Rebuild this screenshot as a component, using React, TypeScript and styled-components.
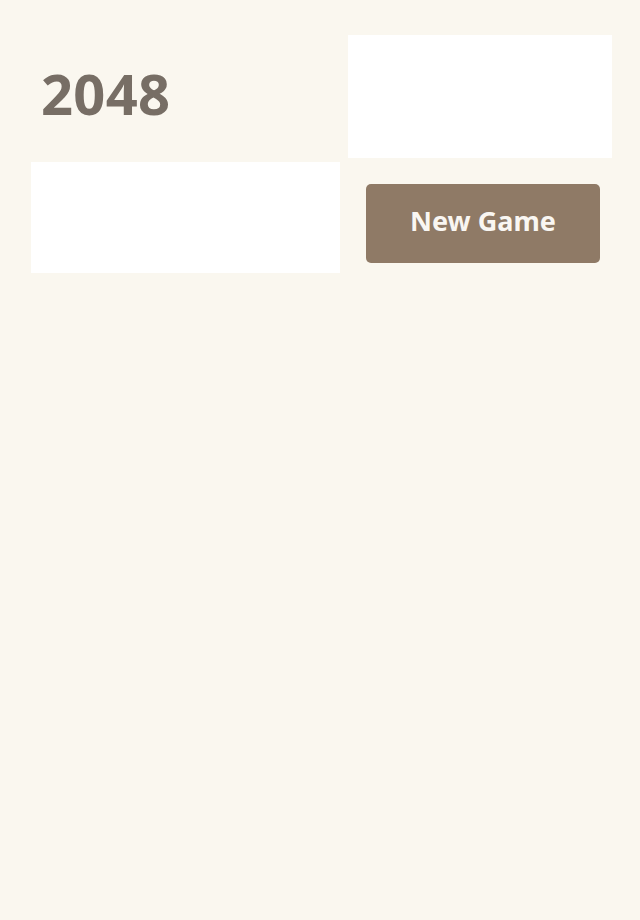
import React from "react";
import styled, { createGlobalStyle } from "styled-components";

const Global = createGlobalStyle`
  html, body { margin: 0; padding: 0; background: #faf7ef; }
  body { font-family: "Noto Sans", "Open Sans", sans-serif; }
`;

const Page = styled.div`
  min-height: 920px;
  background: #faf7ef;
  padding: 35px 28px 0 31px;
  box-sizing: border-box;
`;

const Header = styled.div`
  display: grid;
  grid-template-columns: 309px 264px;
  column-gap: 8px;
  row-gap: 4px;
`;

const Title = styled.h1`
  margin: 0;
  height: 123px;
  box-sizing: border-box;
  display: flex;
  align-items: center;
  padding: 0 0 8px 10px;
  font-size: 56px;
  font-weight: 700;
  color: #776e65;
  letter-spacing: 0.3px;
`;

const Panel = styled.div<{ $h: number }>`
  background: #ffffff;
  height: ${(p) => p.$h}px;
`;

const ButtonCell = styled.div`
  padding: 22px 12px 10px 18px;
`;

const Button = styled.button`
  width: 234px;
  height: 79px;
  box-sizing: border-box;
  border: none;
  border-radius: 5px;
  background: #8f7a66;
  color: #f9f6f2;
  font-family: "Noto Sans", sans-serif;
  font-size: 27px;
  font-weight: 700;
  cursor: pointer;
  padding: 0 0 6px;
`;

export default function App() {
  return (
    <>
      <Global />
      <Page>
        <Header>
          <Title>2048</Title>
          <Panel $h={123} />
          <Panel $h={111} />
          <ButtonCell>
            <Button>New Game</Button>
          </ButtonCell>
        </Header>
      </Page>
    </>
  );
}
